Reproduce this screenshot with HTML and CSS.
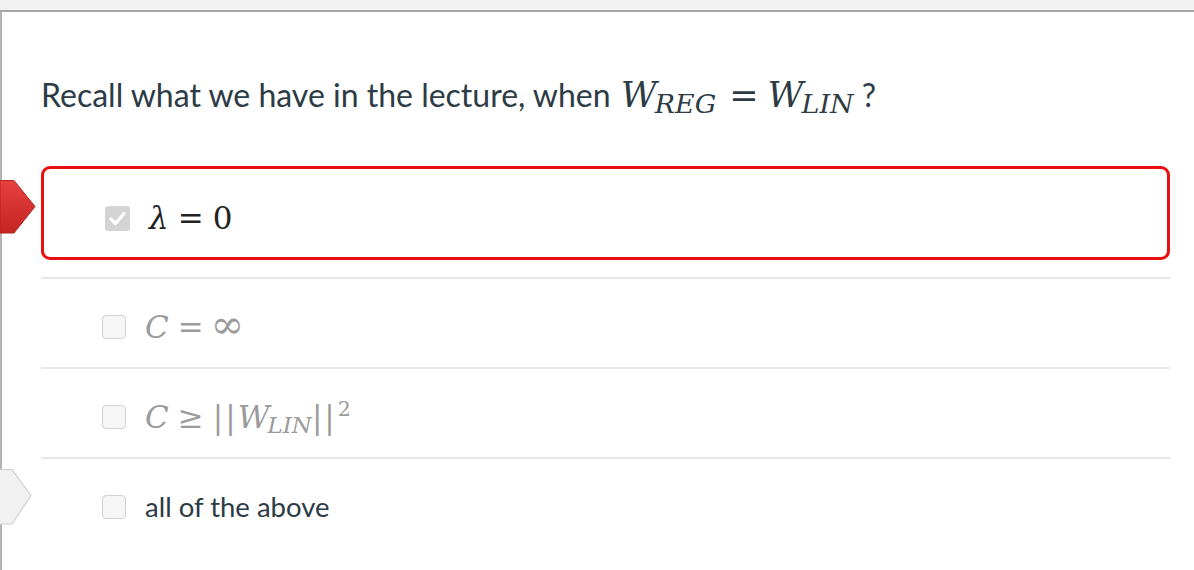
FILE: index.html
```html
<!DOCTYPE html>
<html>
<head>
<meta charset="utf-8">
<link rel="stylesheet" href="styles.css">
</head>
<body>
<div class="topbar"></div>
<div class="page">
  <p class="question">Recall what we have in the lecture, when <span class="math qmath"><span class="mi">W</span><sub class="msub">REG</sub><span class="mo">=</span><span class="mi">W</span><sub class="msub">LIN</sub></span>?</p>
  <div class="answers">
    <div class="answer selected">
      <svg class="marker" width="36" height="54" viewBox="0 0 36 54">
        <defs>
          <linearGradient id="rg" x1="0" y1="0" x2="0" y2="1">
            <stop offset="0" stop-color="#e6423f"/>
            <stop offset="1" stop-color="#c42422"/>
          </linearGradient>
        </defs>
        <polygon points="0,0.5 14,0.5 35,26.5 14,53 0,53" fill="url(#rg)" stroke="#b52220" stroke-width="1"/>
      </svg>
      <span class="box checked">
        <svg width="25" height="25" viewBox="0 0 25 25"><path d="M6 13 L10.5 17.5 L19 7.5" fill="none" stroke="#fff" stroke-width="3.2" stroke-linecap="round" stroke-linejoin="round"/></svg>
      </span>
      <span class="math amath dark"><span class="mi">λ</span><span class="mo">=</span><span class="mn">0</span></span>
    </div>
    <div class="sep"></div>
    <div class="answer">
      <span class="box"></span>
      <span class="math amath grey"><span class="mi">C</span><span class="mo">=</span><span class="mn inf">∞</span></span>
    </div>
    <div class="sep"></div>
    <div class="answer">
      <span class="box"></span>
      <span class="math amath grey"><span class="mi">C</span><span class="mo">≥</span><span class="bar">|</span><span class="bar">|</span><span class="mi">W</span><sub class="msub">LIN</sub><span class="bar">|</span><span class="bar">|</span><sup class="msup">2</sup></span>
    </div>
    <div class="sep"></div>
    <div class="answer">
      <svg class="marker white" width="34" height="57" viewBox="0 0 34 57">
        <polygon points="-1,0.5 12,0.5 31,26.5 12,55 -1,55" fill="#f1f1f1" stroke="#cfcfcf" stroke-width="1.2"/>
      </svg>
      <span class="box"></span>
      <span class="text">all of the above</span>
    </div>
  </div>
</div>
</body>
</html>
```

FILE: styles.css
```css
html, body {
  margin: 0;
  padding: 0;
  background: #fff;
}
body {
  font-family: Lato, "Liberation Sans", sans-serif;
  color: #2d3b45;
  width: 1194px;
  height: 570px;
  overflow: hidden;
}
.topbar {
  height: 10px;
  background: #f1f2f1;
  border-bottom: 2px solid #a6a6a6;
}
.page {
  border-left: 2px solid #b3b3b3;
  padding-left: 39px;
  height: 558px;
  width: 1129px;
}
.question {
  margin: 0;
  padding-top: 63px;
  font-size: 32px;
  line-height: 40px;
  height: 91px;
  white-space: nowrap;
}
.math {
  font-family: "DejaVu Serif", "Liberation Serif", serif;
  font-weight: normal;
}
.qmath {
  font-size: 35px;
  padding: 0 8px 0 2px;
}
.qmath .mo {
  margin: 0 9px 0 13px;
}
.qmath .msub {
  font-size: 0.77em;
  vertical-align: -0.24em;
}
.amath {
  font-size: 31px;
}
.mi {
  font-style: italic;
}
.msub {
  font-style: italic;
  font-size: 0.74em;
  vertical-align: -0.22em;
  line-height: 0;
  margin-left: -2px;
}
.msup {
  font-size: 0.66em;
  vertical-align: 0.55em;
  line-height: 0;
  margin-left: 1px;
}
.mo {
  margin: 0 9px;
}
.inf {
  font-size: 40px;
  line-height: 0;
  margin-left: -2px;
}
.bar {
  display: inline-block;
  margin-right: 2px;
}
.answers {
  display: flex;
  flex-direction: column;
}
.answer {
  position: relative;
  display: flex;
  align-items: center;
  gap: 19px;
  height: 88px;
  box-sizing: border-box;
  padding: 7px 0 0 61px;
}
.answer.selected {
  height: 94px;
  border: 3px solid #e8100f;
  border-radius: 9px;
  padding: 10px 0 0 61px;
}
.sep {
  height: 2px;
  background: #e6e6e6;
}
.selected + .sep {
  margin-top: 17px;
}
.box {
  flex: 0 0 auto;
  width: 24px;
  height: 24px;
  box-sizing: border-box;
  border: 1.5px solid #d2d2d2;
  background: #f6f6f6;
  border-radius: 4px;
}
.box.checked {
  width: 25px;
  height: 25px;
  border: none;
  background: #d4d4d4;
  border-radius: 3px;
}
.box.checked svg {
  display: block;
}
.dark {
  color: #222;
}
.grey {
  color: #9b9b9b;
}
.text {
  font-size: 27.5px;
  color: #2d3b45;
}
.marker {
  position: absolute;
  left: -44px;
  top: 11px;
}
.marker.white {
  left: -41px;
  top: 10px;
}
```
